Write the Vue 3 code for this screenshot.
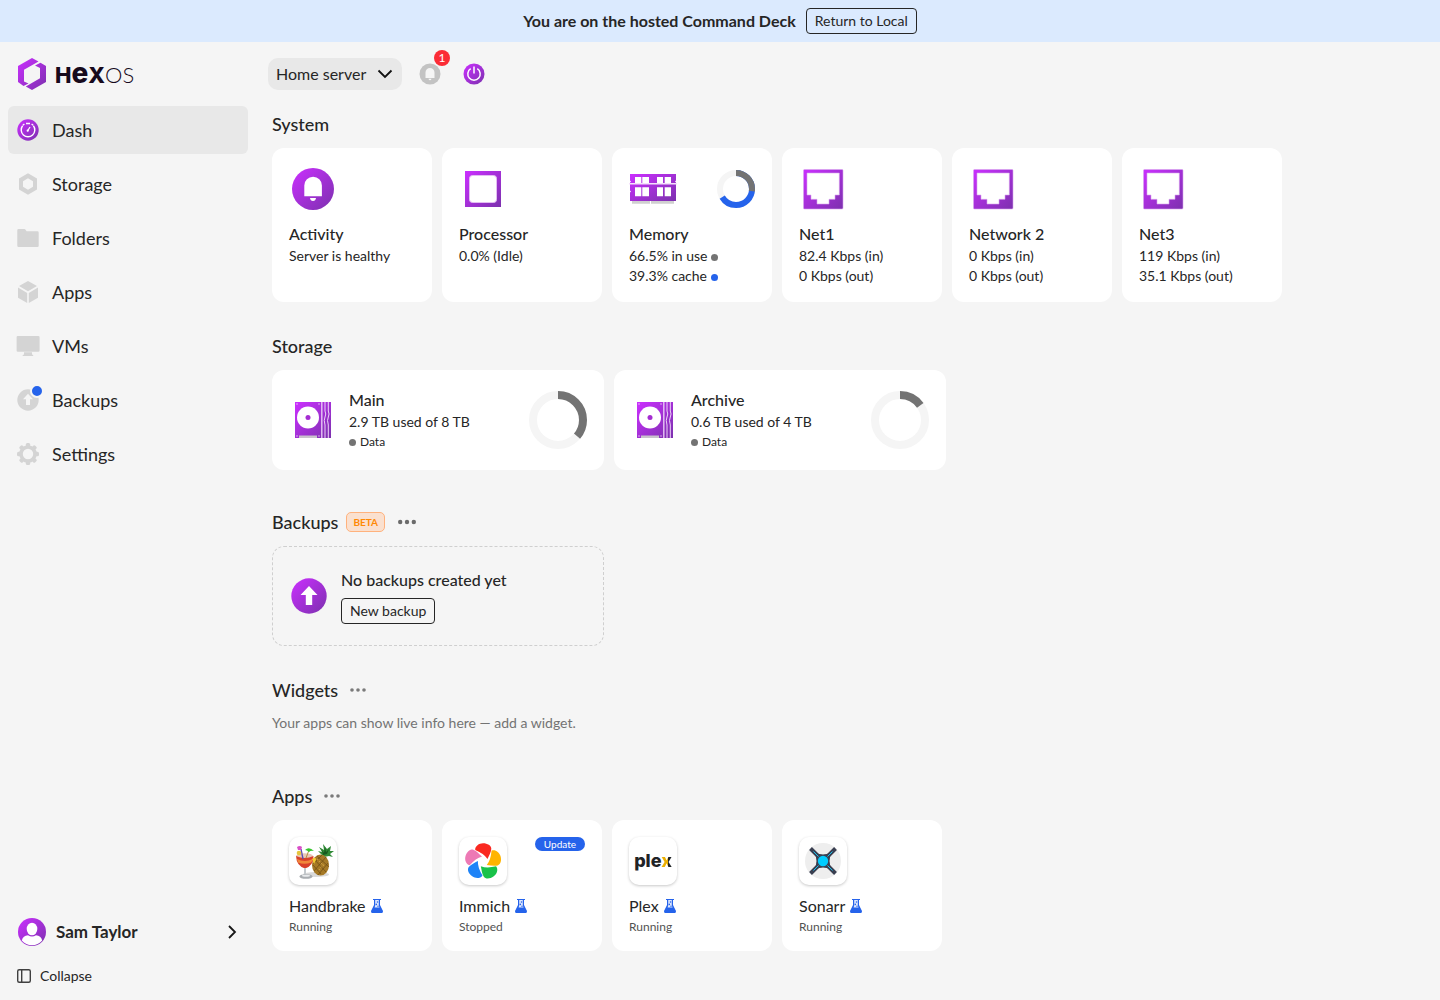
<script setup>
import { ref } from 'vue'

const server = ref('Home server')

const navItems = [
  { label: 'Dash', icon: 'dash', active: true },
  {
    label: 'Storage',
    path: 'M12 1.3 21 6.5v11L12 22.7 3 17.5v-11zM12 6.3 7 9.2v5.6l5 2.9 5-2.9V9.2z'
  },
  { label: 'Folders', path: 'M1.3 4.2q0-1.2 1.2-1.2h5.8q.8 0 1.4.9l.9 1.3h10.9q1.2 0 1.2 1.2v13.4q0 1.2-1.2 1.2h-19q-1.2 0-1.2-1.2z' },
  { label: 'Apps', path: 'M12 1 21 6 12 11.3 3 6zM2 7.6l9.2 5.3v10.2L2 17.8zM22 7.6l-9.2 5.3v10.2l9.2-5.3z' },
  { label: 'VMs', path: 'M1.9 2h20.4q1.3 0 1.3 1.3v13.2q0 1.3-1.3 1.3H1.9q-1.3 0-1.3-1.3V3.3Q.6 2 1.9 2zM8 18.2h8v2.3l1.2.5v1H6.7v-1l1.3-.5z' },
  {
    label: 'Backups',
    dot: true,
    path: 'M12 1.3a10.7 10.7 0 1 0 0 21.4 10.700 10.700 0 0 0 0-21.4zM12 5.8l5 5.400h-3v5.800h-4v-5.800H7z'
  },
  { label: 'Settings', icon: 'gear' }
]

const gearTeeth = [0, 45, 90, 135, 180, 225, 270, 315]
const petals = ['#fa2921', '#ffb400', '#18c249', '#1e83f7', '#ed79b5']

const systemCards = [
  { icon: 'activity', title: 'Activity', lines: [{ text: 'Server is healthy' }] },
  { icon: 'processor', title: 'Processor', lines: [{ text: '0.0% (Idle)' }] },
  {
    icon: 'memory',
    title: 'Memory',
    lines: [
      { text: '66.5% in use', dot: 'gray' },
      { text: '39.3% cache', dot: 'blue' }
    ]
  },
  { icon: 'net', title: 'Net1', lines: [{ text: '82.4 Kbps (in)' }, { text: '0 Kbps (out)' }] },
  { icon: 'net', title: 'Network 2', lines: [{ text: '0 Kbps (in)' }, { text: '0 Kbps (out)' }] },
  { icon: 'net', title: 'Net3', lines: [{ text: '119 Kbps (in)' }, { text: '35.1 Kbps (out)' }] }
]

const pools = [
  { name: 'Main', usage: '2.9 TB used of 8 TB', percent: 36.25 },
  { name: 'Archive', usage: '0.6 TB used of 4 TB', percent: 15 }
]

const apps = [
  { name: 'Handbrake', status: 'Running' },
  { name: 'Immich', status: 'Stopped', update: true },
  { name: 'Plex', status: 'Running' },
  { name: 'Sonarr', status: 'Running' }
]
</script>

<template>
  <div class="page">
    <svg class="defs" width="0" height="0" aria-hidden="true">
      <defs>
        <linearGradient id="brand" x1="0" y1="0" x2="1" y2="1">
          <stop offset="0" stop-color="#cb2fff" />
          <stop offset="1" stop-color="#7c31ae" />
        </linearGradient>
      </defs>
    </svg>

    <div class="banner">
      <strong>You are on the hosted Command Deck</strong>
      <button type="button" class="outline-btn">Return to Local</button>
    </div>

    <div class="shell">
      <aside class="sidebar">
        <a href="#" class="logo" aria-label="HexOS">
          <svg width="28" height="32" viewBox="0 0 28 32" aria-hidden="true">
            <path fill="url(#brand)" d="M14 0 20.500 3.500 6 11.800V23.500L10.500 25.500 5.500 28 0 24V8zM22.500 4.800 28 8V24L14 32 7.800 28.500 22 20.300V10L17 7.500z" />
          </svg>
          <span class="wordmark"><b>H</b><b class="tall">e</b><b>X</b><i>OS</i></span>
        </a>

        <nav class="nav">
          <a v-for="item in navItems" :key="item.label" href="#" class="nav-item" :class="{ active: item.active }">
            <span class="nav-icon">
              <svg width="24" height="24" viewBox="0 0 24 24" aria-hidden="true">
                <template v-if="item.icon === 'dash'">
                  <circle cx="12" cy="12" r="10.700" fill="url(#brand)" />
                  <path d="M6.600 7.800A6.800 6.800 0 1 0 17.400 7.800M10 5.500h4M6.800 7.200l1.600-1.200M17.200 7.200l-1.600-1.200" fill="none" stroke="#fff" stroke-width="1.400" />
                  <path d="m11.500 13 2.500-4" stroke="#fff" stroke-width="1.300" />
                  <circle cx="11.700" cy="12.700" r="1.100" fill="#fff" />
                </template>
                <template v-else-if="item.icon === 'gear'">
                  <rect
                    v-for="angle in gearTeeth"
                    :key="angle"
                    x="9.800"
                    y="1"
                    width="4.400"
                    height="5"
                    rx="1.500"
                    fill="#d4d4d4"
                    :transform="`rotate(${angle} 12 12)`"
                  />
                  <circle cx="12" cy="12" r="7" fill="none" stroke="#d4d4d4" stroke-width="3.600" />
                </template>
                <path v-else :d="item.path" fill="#d4d4d4" fill-rule="evenodd" />
              </svg>
              <span v-if="item.dot" class="nav-dot"></span>
            </span>
            {{ item.label }}
          </a>
        </nav>

        <div class="sidebar-foot">
          <button type="button" class="user">
            <svg width="28" height="28" viewBox="0 0 28 28" aria-hidden="true">
              <circle cx="14" cy="14" r="14" fill="url(#brand)" />
              <ellipse cx="14" cy="11" rx="5.300" ry="6.300" fill="#fff" />
              <path d="M3.800 22.500Q5 17.500 10 17.300q4 2.400 8 0 5 .2 6.200 5.200A13.500 13.500 0 0 1 3.800 22.500z" fill="#fff" />
            </svg>
            <span class="user-name">Sam Taylor</span>
            <svg width="12" height="16" viewBox="0 0 12 16" aria-hidden="true">
              <path d="m3 2 6 6-6 6" fill="none" stroke="#171717" stroke-width="1.800" />
            </svg>
          </button>
          <button type="button" class="collapse">
            <svg width="16" height="16" viewBox="0 0 16 16" fill="none" stroke="#404040" stroke-width="1.400" aria-hidden="true">
              <rect x="1.700" y="1.700" width="12.600" height="12.600" rx="1.500" />
              <path d="M5.700 1.700v12.600" />
            </svg>
            Collapse
          </button>
        </div>
      </aside>

      <main class="main">
        <header class="topbar">
          <div class="server-picker">
            <select v-model="server" aria-label="Server">
              <option>Home server</option>
            </select>
            <svg width="16" height="16" viewBox="0 0 16 16" aria-hidden="true">
              <path d="m1.500 4.500 6.500 6.500 6.500-6.500" fill="none" stroke="#111" stroke-width="1.800" />
            </svg>
          </div>
          <button type="button" class="icon-btn" aria-label="Notifications">
            <svg width="24" height="24" viewBox="0 0 24 24" aria-hidden="true">
              <circle cx="12" cy="12" r="10.500" fill="#c3c3c3" />
              <path d="M7.500 16V10.500a4.500 4.500 0 0 1 9 0V16zM10.500 16.800h3q-.3 1.500-1.500 1.500t-1.500-1.500z" fill="#f5f5f5" />
            </svg>
            <span class="count">1</span>
          </button>
          <button type="button" class="icon-btn" aria-label="Power">
            <svg width="24" height="24" viewBox="0 0 24 24" aria-hidden="true">
              <circle cx="12" cy="12" r="10.500" fill="url(#brand)" />
              <path d="M8.700 6.700a6.200 6.200 0 1 0 6.600 0M12 4.600v7" fill="none" stroke="#fff" stroke-width="1.500" />
            </svg>
          </button>
        </header>

        <section class="section">
          <h2>System</h2>
          <div class="cards">
            <article v-for="card in systemCards" :key="card.title" class="card small-card">
              <div class="card-top">
                <svg width="48" height="48" viewBox="0 0 48 48" aria-hidden="true">
                  <template v-if="card.icon === 'activity'">
                    <circle cx="24" cy="24" r="21" fill="url(#brand)" />
                    <path d="M15.300 31.300V20.500a8.800 8.800 0 0 1 17.600 0V31.300zM21 32.900h6q-.4 3-3 3t-3-3z" fill="#fff" />
                  </template>
                  <template v-else-if="card.icon === 'processor'">
                    <rect x="6" y="6" width="36" height="36" fill="url(#brand)" />
                    <rect x="10.500" y="10.500" width="27" height="27" rx="3" fill="#fff" stroke="#e3bdf2" />
                  </template>
                  <template v-else-if="card.icon === 'memory'">
                    <path d="M3 36h18v2.700H3zM22 36h23v2.700H22z" fill="#d0d0d0" />
                    <path
                      fill="url(#brand)"
                      fill-rule="evenodd"
                      d="M1 9h46v6.500l-1 1 1 1V36H1V27.500l1-1-1-1v-8l1-1-1-1zM6 12v6h6.300v-6zM13.300 12v6H20v-6zM28 12v6h6v-6zM35.700 12v6H42v-6zM6 22.300v9h6.300v-9zM13.300 22.300v9H20v-9zM28 22.300v9h6v-9zM35.700 22.300v9H42v-9z"
                    />
                    <path d="M0 18.800h48" stroke="#f3dffb" stroke-width="1.400" />
                  </template>
                  <template v-else>
                    <path
                      fill="url(#brand)"
                      fill-rule="evenodd"
                      stroke="#d9a6ee"
                      stroke-width=".6"
                      d="M5.500 4.500h37.500q1 0 1 1V43q0 1-1 1H5.500q-1 0-1-1V5.500q0-1 1-1zM8 8v22h4v4.300h6V39h12v-4.700h6V30h4.300V8z"
                    />
                  </template>
                </svg>
                <svg v-if="card.icon === 'memory'" width="38" height="38" viewBox="0 0 38 38" aria-hidden="true">
                  <g fill="none" stroke-width="6" transform="rotate(-90 19 19)">
                    <circle cx="19" cy="19" r="16" stroke="#f5f5f5" />
                    <circle cx="19" cy="19" r="16" stroke="#2563eb" pathLength="100" stroke-dasharray="66.500 100" />
                    <circle cx="19" cy="19" r="16" stroke="#737373" pathLength="100" stroke-dasharray="27.200 100" />
                  </g>
                </svg>
              </div>
              <h3>{{ card.title }}</h3>
              <p v-for="line in card.lines" :key="line.text" class="line">
                {{ line.text }}<span v-if="line.dot" class="dot" :class="line.dot"></span>
              </p>
            </article>
          </div>
        </section>

        <section class="section storage">
          <h2>Storage</h2>
          <div class="cards">
            <article v-for="pool in pools" :key="pool.name" class="card wide-card">
              <svg width="48" height="48" viewBox="0 0 48 48" aria-hidden="true">
                <rect x="6" y="6" width="36" height="36" fill="url(#brand)" />
                <path d="M32.800 6v36" stroke="#e6c8f3" stroke-width="1.400" />
                <path d="M36 6v9q1.500 3 0 6t0 8v13M39.300 6v9q1.500 3 0 6t0 8v13" fill="none" stroke="#eed5f8" stroke-width="1" />
                <circle cx="19" cy="21.500" r="11" fill="#fff" />
                <circle cx="19" cy="21.500" r="2.500" fill="#a52dd2" />
                <path d="M10 39.500h18V42H10z" fill="#c9c2cc" />
                <g fill="#f0d9fa">
                  <circle cx="8" cy="8" r=".7" /><circle cx="30" cy="8" r=".7" />
                  <circle cx="8" cy="40" r=".7" /><circle cx="30" cy="40" r=".7" />
                </g>
              </svg>
              <div class="wide-text">
                <h3>{{ pool.name }}</h3>
                <p class="line">{{ pool.usage }}</p>
                <p class="legend"><span class="dot gray"></span>Data</p>
              </div>
              <svg width="58" height="58" viewBox="0 0 58 58" aria-hidden="true">
                <g fill="none" stroke-width="8" transform="rotate(-90 29 29)">
                  <circle cx="29" cy="29" r="25" stroke="#f5f5f5" />
                  <circle cx="29" cy="29" r="25" stroke="#737373" pathLength="100" :stroke-dasharray="`${pool.percent} 100`" />
                </g>
              </svg>
            </article>
          </div>
        </section>

        <section class="section">
          <div class="heading">
            <h2>Backups</h2>
            <span class="beta">BETA</span>
            <button type="button" class="more" aria-label="Backup options">
              <svg width="20" height="20" viewBox="0 0 20 20" fill="#6b6b6b" aria-hidden="true">
                <circle cx="3.200" cy="10" r="2.200" /><circle cx="10" cy="10" r="2.200" /><circle cx="16.800" cy="10" r="2.200" />
              </svg>
            </button>
          </div>
          <div class="card wide-card empty-card">
            <svg width="40" height="40" viewBox="0 0 40 40" aria-hidden="true">
              <circle cx="20" cy="20" r="17.700" fill="url(#brand)" />
              <path d="m20 10 8.500 9h-5.300v10h-6.400V19h-5.300z" fill="#fff" />
            </svg>
            <div class="wide-text">
              <h3>No backups created yet</h3>
              <button type="button" class="outline-btn">New backup</button>
            </div>
          </div>
        </section>

        <section class="section widgets">
          <div class="heading">
            <h2>Widgets</h2>
            <button type="button" class="more" aria-label="Widget options">
              <svg width="16" height="16" viewBox="0 0 16 16" fill="#7a7a7a" aria-hidden="true">
                <circle cx="2" cy="8" r="1.800" /><circle cx="8" cy="8" r="1.800" /><circle cx="14" cy="8" r="1.800" />
              </svg>
            </button>
          </div>
          <p class="hint">Your apps can show live info here — add a widget.</p>
        </section>

        <section class="section">
          <div class="heading">
            <h2>Apps</h2>
            <button type="button" class="more" aria-label="App options">
              <svg width="16" height="16" viewBox="0 0 16 16" fill="#7a7a7a" aria-hidden="true">
                <circle cx="2" cy="8" r="1.800" /><circle cx="8" cy="8" r="1.800" /><circle cx="14" cy="8" r="1.800" />
              </svg>
            </button>
          </div>
          <div class="cards">
            <article v-for="app in apps" :key="app.name" class="card small-card">
              <div class="card-top app-top">
                <span class="tile">
                  <svg v-if="app.name === 'Handbrake'" width="48" height="48" viewBox="0 0 48 48" aria-hidden="true">
                    <ellipse cx="27" cy="37.500" rx="13" ry="2.500" fill="#d9d9d9" />
                    <path d="m35 20-6-6 4 1-3-5 5 3-1-6 4 5 4-3-1 5 4 0-4 3 3 3-4-1z" fill="#2f8a35" />
                    <path d="m34 18-1-5 2 3 1-6 1 5 3-3-2 5z" fill="#17591f" />
                    <ellipse cx="31.500" cy="28" rx="8.500" ry="10.500" fill="#a67a26" />
                    <path d="m25 22 12 13M28 19l12 11M24 28l8 9M37 20 25 34M39 26 29 38M33 18l-9 9" stroke="#6b4a12" stroke-width=".7" />
                    <path d="m28 22 8 8M30 33l5-7" stroke="#dcae4c" stroke-width="1" stroke-dasharray="1 2" />
                    <ellipse cx="15.500" cy="19" rx="8.500" ry="2.800" fill="#e8c7b6" />
                    <path d="M7 19q9 4 17.500 0 0 10-8.500 12.500Q7.500 29 7 19z" fill="#d8402a" />
                    <path d="M8 22q8 4 15.500 0-.3 2-1.200 3.500-7 2.500-13.300 0z" fill="#f0873a" />
                    <path d="M15 31h2v7h-2z" fill="#c4c9cd" />
                    <ellipse cx="17" cy="39.500" rx="6.500" ry="2.300" fill="#a9adb1" />
                    <ellipse cx="17" cy="38.800" rx="4" ry="1" fill="#e8eaec" />
                    <path d="m12 12 2 10" stroke="#5a4ab4" stroke-width="1.300" />
                    <path d="m20 13-3 8" stroke="#b58b3e" />
                    <path d="M8 10q3-2 5 0l-1 3H9z" fill="#d94fc7" />
                    <path d="M16 13q4-4 9 1-3-1-5 1-2-2-4-2z" fill="#35c62c" />
                    <circle cx="10" cy="16" r="2.300" fill="#e5c63c" />
                    <path d="M23 22q4-3 4 1l-2 4z" fill="#f3cb31" />
                  </svg>
                  <svg v-else-if="app.name === 'Immich'" width="48" height="48" viewBox="0 0 48 48" aria-hidden="true">
                    <path
                      v-for="(color, i) in petals"
                      :key="color"
                      :fill="color"
                      :transform="`translate(24 24.500) rotate(${i * 72})`"
                      d="M4.500-2.500Q1-8-7.800-11.500C-8-15.500-4-18.300 0-18.300 4.500-18.300 8.300-16 8.300-12.800 8-9 6-6 4.500-2.500z"
                    />
                  </svg>
                  <span v-else-if="app.name === 'Plex'" class="plex">ple<span>x</span></span>
                  <svg v-else width="48" height="48" viewBox="0 0 48 48" aria-hidden="true">
                    <circle cx="24" cy="24" r="18" fill="#eee" />
                    <path d="m11.500 11.500 25 25m0-25-25 25" stroke="#3a3f51" stroke-width="4" />
                    <path d="M16 16q8 4 16 0-4 8 0 16-8-4-16 0 4-8 0-16z" fill="#3a3f51" stroke="#3a3f51" />
                    <path d="m14.500 14.500 5 5m9 9 5 5m0-19-5 5m-9 9-5 5" stroke="#16c2ef" stroke-width="1" />
                    <circle cx="24" cy="24" r="5.200" fill="#0cf" />
                  </svg>
                </span>
                <span v-if="app.update" class="update">Update</span>
              </div>
              <h3 class="app-name">
                {{ app.name }}
                <svg width="12" height="14" viewBox="0 0 12 14" aria-hidden="true">
                  <path d="M2 0h8v1H2zM3 1v5L0 12q0 2 1 2h10q1 0 1-2L9 6V1z" fill="#2563eb" />
                  <path d="M4.200 1h3.600v5.500l.8 1.900H3.600l.6-1.900z" fill="#dfe8fd" />
                  <circle cx="6.500" cy="3" r=".8" fill="#2563eb" /><circle cx="5.300" cy="5.400" r=".8" fill="#2563eb" /><circle cx="7" cy="7.300" r=".7" fill="#2563eb" />
                </svg>
              </h3>
              <p class="status">{{ app.status }}</p>
            </article>
          </div>
        </section>
      </main>
    </div>
  </div>
</template>

<style>
body {
  background: #f5f5f5;
}
</style>

<style scoped>
.page {
  display: flex;
  flex-direction: column;
  min-height: 100vh;
  box-sizing: border-box;
  background: #f5f5f5;
  color: #262626;
  font-family: Lato, "Liberation Sans", sans-serif;
  font-size: 14px;
  line-height: 20px;
}

.page *,
.page *::before {
  box-sizing: border-box;
}

.defs {
  position: absolute;
}

svg {
  display: block;
  flex: none;
}

button,
select {
  margin: 0;
  padding: 0;
  border: 0;
  background: none;
  color: inherit;
  font: inherit;
  cursor: pointer;
}

a {
  color: inherit;
  text-decoration: none;
}

h2,
h3,
p {
  margin: 0;
  font-weight: 400;
}

h2 {
  font-size: 18px;
  line-height: 24px;
  font-weight: 500;
}

h3 {
  font-size: 16px;
  line-height: 24px;
  font-weight: 500;
}

.banner {
  display: flex;
  align-items: center;
  justify-content: center;
  gap: 10px;
  padding: 8px 16px;
  background: #dbeafe;
  font-size: 16px;
}

.outline-btn {
  height: 26px;
  padding: 0 8px;
  border: 1px solid #262626;
  border-radius: 4px;
  font-size: 14px;
  line-height: 20px;
}

.shell {
  display: flex;
  flex: 1;
}

.sidebar {
  display: flex;
  flex-direction: column;
  flex: none;
  width: 256px;
  padding: 16px 8px 14px;
}

.logo {
  display: flex;
  align-items: center;
  gap: 9px;
  height: 32px;
  margin: 0 10px 16px;
}

.wordmark {
  display: flex;
  align-items: baseline;
  color: #170a1c;
  font-family: Inter, "Liberation Sans", sans-serif;
  font-size: 22px;
  line-height: 32px;
}

.wordmark b {
  font-weight: 800;
}

.wordmark .tall {
  font-size: 28px;
}

.wordmark i {
  font-family: Lato, "Liberation Sans", sans-serif;
  font-style: normal;
  font-weight: 300;
}

.nav {
  display: flex;
  flex-direction: column;
  gap: 6px;
}

.nav-item {
  display: flex;
  align-items: center;
  gap: 12px;
  height: 48px;
  padding: 0 8px;
  border-radius: 6px;
  font-size: 18px;
  line-height: 24px;
}

.nav-item.active {
  background: #e8e8e8;
}

.nav-icon {
  position: relative;
}

.nav-dot {
  position: absolute;
  top: -4px;
  right: -4px;
  width: 14px;
  height: 14px;
  border: 2px solid #f5f5f5;
  border-radius: 50%;
  background: #2563eb;
}

.sidebar-foot {
  display: flex;
  flex-direction: column;
  gap: 20px;
  margin-top: auto;
}

.user {
  display: flex;
  align-items: center;
  gap: 10px;
  padding: 0 10px;
  text-align: left;
}

.user-name {
  flex: 1;
  font-size: 17px;
  font-weight: 700;
}

.collapse {
  display: flex;
  align-items: center;
  gap: 8px;
  padding: 0 8px;
}

.main {
  flex: 1;
  min-width: 0;
  padding: 16px;
}

.topbar {
  display: flex;
  align-items: center;
  gap: 20px;
  margin: 0 0 22px -4px;
}

.server-picker {
  display: grid;
  align-items: center;
  width: 134px;
  margin-right: -4px;
}

.server-picker select {
  grid-area: 1 / 1;
  height: 32px;
  padding: 0 8px;
  border-radius: 10px;
  background: #e8e8e8;
  font-size: 16px;
  appearance: none;
}

.server-picker svg {
  grid-area: 1 / 1;
  justify-self: end;
  margin-right: 9px;
  pointer-events: none;
}

.icon-btn {
  position: relative;
}

.count {
  position: absolute;
  top: -12px;
  right: -8px;
  width: 16px;
  height: 16px;
  border-radius: 50%;
  background: #fb2c36;
  color: #fff;
  font-size: 12px;
  line-height: 16px;
  text-align: center;
}

.section {
  display: flex;
  flex-direction: column;
  gap: 12px;
  padding-bottom: 32px;
}

.section:last-child {
  padding-bottom: 0;
}

.storage {
  padding-bottom: 40px;
}

.cards {
  display: flex;
  flex-wrap: wrap;
  gap: 10px;
}

.card {
  padding: 16px 16px 15px;
  border: 1px solid transparent;
  border-radius: 12px;
  background: #fff;
}

.small-card {
  width: 160px;
}

.card-top {
  display: flex;
  align-items: center;
  justify-content: space-between;
  height: 48px;
  margin-bottom: 9px;
}

.app-top {
  align-items: flex-start;
}

.dot {
  display: inline-block;
  width: 7px;
  height: 7px;
  margin-left: 4px;
  border-radius: 50%;
}

.dot.gray {
  background: #737373;
}

.dot.blue {
  background: #2563eb;
}

.wide-card {
  display: flex;
  align-items: center;
  gap: 12px;
  width: 332px;
  height: 100px;
  padding: 16px;
}

.wide-text {
  flex: 1;
}

.legend {
  display: flex;
  align-items: center;
  gap: 4px;
  font-size: 12px;
}

.legend .dot {
  margin-left: 0;
}

.heading {
  display: flex;
  align-items: center;
  height: 24px;
}

.beta {
  margin-left: 8px;
  padding: 0 6px;
  border: 1px solid #ffb27d;
  border-radius: 5px;
  background: #fae0cf;
  color: #ff8904;
  font-size: 10px;
  font-weight: 700;
  line-height: 18px;
}

.more {
  margin-left: 12px;
}

.empty-card {
  border: 1px dashed #cfcfcf;
  background: none;
}

.empty-card .wide-text {
  display: flex;
  flex-direction: column;
  align-items: flex-start;
  gap: 6px;
}

.hint {
  color: #737373;
  line-height: 18px;
}

.widgets {
  padding-bottom: 52px;
}

.tile {
  display: grid;
  place-items: center;
  width: 48px;
  height: 48px;
  border-radius: 10px;
  background: #fff;
  box-shadow: 0 1px 3px rgb(0 0 0 / 22%);
}

.plex {
  color: #1f2326;
  font-family: Inter, "Liberation Sans", sans-serif;
  font-size: 18px;
  font-weight: 800;
}

.plex span {
  background: linear-gradient(90deg, #ebaf00 62%, #1f2326 62%);
  background-clip: text;
  color: transparent;
}

.update {
  padding: 0 9px;
  border-radius: 7px;
  background: #2563eb;
  color: #fff;
  font-size: 10px;
  line-height: 14px;
}

.app-name {
  display: flex;
  align-items: center;
  gap: 5px;
  font-weight: 400;
}

.status {
  color: #525252;
  font-size: 12px;
  line-height: 17px;
}
</style>
